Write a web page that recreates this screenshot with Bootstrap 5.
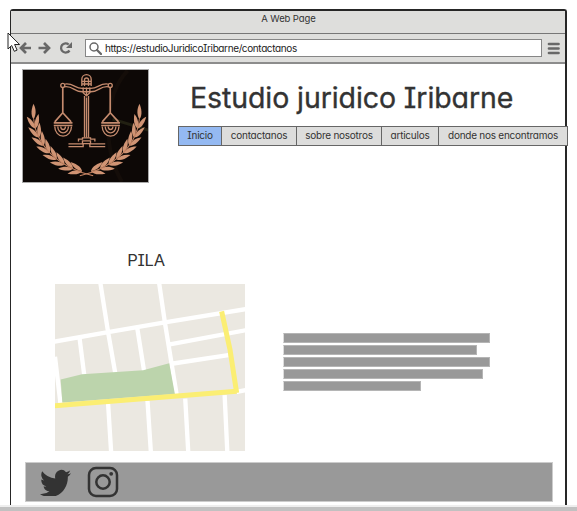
<!DOCTYPE html>
<html lang="es">
<head>
<meta charset="utf-8">
<title>Estudio juridico Iribarne</title>
<meta name="viewport" content="width=device-width, initial-scale=1">
<link href="https://cdn.jsdelivr.net/npm/bootstrap@5.3.0/dist/css/bootstrap.min.css" rel="stylesheet">
<style>
body{width:577px;height:511px;overflow:hidden;background:#fff;color:#333;font-family:Inter,"Noto Sans",sans-serif;font-feature-settings:"cv11","cv08"}
.screen{height:511px;padding:9px 0 0 10px}
.window{width:557px;height:496px;border:solid #262626;border-width:2px 2px 0 2px;border-left-width:1.5px;border-radius:3px 3px 0 0}
.titlebar{height:22px;background:#dededc;font-size:9.5px;line-height:15px;letter-spacing:-.1px;padding-left:1px}
.toolbar{height:31px;background:#dededc;border-top:1px solid #777;border-bottom:2px solid #8c8c8c;padding-left:7px}
.address{width:457px;height:18px;border:1px solid #868686;margin-left:11px;font-size:10px;line-height:16px;color:#222;padding-left:3px}
.address span{letter-spacing:-.38px;margin-left:3px}
.hero{height:119px;padding:5px 0 0 11px}
.brand{width:127px;height:114px;border:1px solid #aaa;flex:none}
.heading{font-size:28.5px;line-height:40px;margin:9px 0 8px 41px;white-space:nowrap;font-weight:400;letter-spacing:-.09px;-webkit-text-stroke:.35px #333}
.menu{width:390px;height:20px;border:1px solid #666;background:#dddddc;font-size:10px;line-height:17px;margin-left:29px}
.menu .nav-link{padding:0;color:#333;text-align:center;white-space:nowrap;border-right:1px solid #666;letter-spacing:-.25px}
.menu .nav-link:last-child{border:0}
.menu .nav-link.active{background:#94b9f2}
.w1{width:43px}.w2{width:75px}.w3{width:85px}.w4{width:57px}.w5{width:128px}
.content{height:279px;padding:66px 0 0 44px}
.place{width:190px}
.place h2{font-size:16.5px;line-height:22px;margin:0 8px 13px 0;text-align:center;font-weight:400;letter-spacing:-.2px}
.paragraph{padding:84px 0 0 38px}
.textbar{height:10px;margin-bottom:2px;background:#999;border:1px solid #b5b5b5;border-left-color:#ddd}
.l1{width:207px}.l2{width:194px}.l4{width:200px}.l5{width:138px}
.social{width:528px;height:40px;margin-left:14px;background:#999;border:1px solid #ccc;padding-left:14px}
.edge{height:6px;background:#c1c1c1;border-top:2px solid #eee;margin-left:-10px}
.pointer{position:absolute;left:7px;top:32px}
svg{display:block;flex:none}
</style>
<script src="https://cdn.jsdelivr.net/npm/bootstrap@5.3.0/dist/js/bootstrap.bundle.min.js"></script>
</head>
<body>
<div class="screen">
<div class="window">
  <div class="titlebar text-center">A Web Page</div>
  <div class="toolbar d-flex align-items-center">
    <svg width="56" height="14" viewBox="0 0 56 14" fill="none" stroke="#686868" stroke-width="2.7"><path d="M13 7H3M8 2L3 7l5 5M20.500 7H31M26 2l5 5-5 5"/><path d="M51.500 9.500a4.600 4.600 0 1 1-.8-6" stroke-width="2.300"/><path d="M54 1v6h-6z" fill="#686868" stroke="none"/></svg>
    <div class="address d-flex align-items-center bg-white">
      <svg width="13" height="13" viewBox="0 0 13 13" fill="none" stroke="#686868"><circle cx="5" cy="5" r="4" stroke-width="1.500"/><path d="M8 8l4 4" stroke-width="2.300" stroke-linecap="round"/></svg>
      <span>https://estudioJuridicoIribarne/contactanos</span>
    </div>
    <svg class="ms-1" width="15" height="13" viewBox="0 0 15 13" stroke="#686868" stroke-width="2.700" stroke-linecap="round"><path d="M3 2h9.500M3 6.500h9.500M3 11h9.500"/></svg>
  </div>
  <header class="hero d-flex">
    <div class="brand">
      <svg width="125" height="112" viewBox="22 18 374 335" preserveAspectRatio="none" aria-label="Balanza">
        <defs>
          <g id="pan" fill="none" stroke="#c58b6e" stroke-width="4"><path d="M141 70v76M141 146l-24 27M141 146l25 27" stroke-width="5"/><path d="M114 176h56M114 184h56" stroke-width="5"/><path d="M117 187a25 29 0 0 0 50 0M126 187a16 19 0 0 0 32 0M135 187a7 9 0 0 0 14 0"/></g>
          <g id="half"></g>
        </defs>
        <path fill="#0d0806" d="M20 16h380v340H20z"/>
        <path d="M335 20q-52 55-57 155t40 178" fill="none" stroke="#140d09" stroke-width="12"/>
        <path d="M290 165l106 33" stroke="#222012" stroke-width="9"/>
        <use href="#pan"/><use href="#pan" x="142"/>
        <g fill="none" stroke="#c58b6e" stroke-width="4">
          <circle cx="141" cy="64" r="6"/><circle cx="283" cy="64" r="6"/>
          <path d="M148 60c25-3 28 12 51 13h26c23-1 26-16 51-13M148 68c25-2 26 15 51 15h26c25 0 26-17 51-15"/>
          <path d="M198 66V46a14 14 0 0 1 28 0v20M206 66V48a6 6 0 0 1 12 0v18M198 52h28M198 60h28M202 70v16l10 9 10-9V70M212 70v24"/>
          <path d="M206 96v124M212 100v120M218 96v124"/><path d="M158 239h42v-9h24v9h44M158 247h44v-9h20v9h46M188 232v-7h12v-4h24v4h13v7"/>
        </g>
        <use href="#half"/><use href="#half" transform="matrix(-1 0 0 1 424 0)"/>
      </svg>
    </div>
    <div>
      <h1 class="heading">Estudio juridico Iribarne</h1>
      <nav class="menu nav flex-nowrap position-relative">
        <a class="nav-link active w1" href="#">Inicio</a><a class="nav-link w2" href="#">contactanos</a><a class="nav-link w3" href="#">sobre nosotros</a><a class="nav-link w4" href="#">articulos</a><a class="nav-link w5" href="#">donde nos encontramos</a>
      </nav>
    </div>
  </header>
  <main class="content d-flex">
    <section class="place">
      <h2>PILA</h2>
      <svg width="190" height="167" viewBox="16 132 569 500" preserveAspectRatio="none" fill="none" stroke="#fff" stroke-width="13">
        <path fill="#ebe8e1" stroke="none" d="M16 132h569v500H16z"/>
        <path d="M10 305L175 276 345 247 590 207M152 130l23 146 22 126M328 130l17 117 35 215M89 290l15 118M262 262l21 132M360 313l230-43M370 370l165-25M16 350l17 145M560 455l30-6M175 490l9 144M293 482l10 152M406 475l9 159M524 465l8 169"/>
        <path fill="#bcd4ac" stroke="none" d="M33 418l64-16 183-12 78-21 17 92-337 26z"/>
        <path stroke="#fbee73" stroke-width="15" d="M14 497l546-44M515 214l25 114 20 130"/>
      </svg>
    </section>
    <section class="paragraph">
      <div class="textbar l1"></div><div class="textbar l2"></div><div class="textbar l1"></div><div class="textbar l4"></div><div class="textbar l5"></div>
    </section>
  </main>
  <footer class="social d-flex align-items-center">
    <svg width="31" height="27" viewBox="0 1.500 16 13" preserveAspectRatio="none" fill="#333"><path d="M5.026 15c6.038 0 9.341-5.003 9.341-9.334 0-.14 0-.282-.006-.422A6.685 6.685 0 0 0 16 3.542a6.658 6.658 0 0 1-1.889.518 3.301 3.301 0 0 0 1.447-1.817 6.533 6.533 0 0 1-2.087.793A3.286 3.286 0 0 0 7.875 6.030a9.325 9.325 0 0 1-6.767-3.429 3.289 3.289 0 0 0 1.018 4.382A3.323 3.323 0 0 1 .640 6.575v.045a3.288 3.288 0 0 0 2.632 3.218 3.203 3.203 0 0 1-.865.115 3.230 3.230 0 0 1-.614-.057 3.283 3.283 0 0 0 3.067 2.277A6.588 6.588 0 0 1 .780 13.580a6.320 6.320 0 0 1-.780-.045A9.344 9.344 0 0 0 5.026 15z"/></svg>
    <svg class="ms-3" width="32" height="32" viewBox="0 0 32 32" fill="none" stroke="#333" stroke-width="2.500"><rect x="2" y="2" width="28" height="28" rx="7"/><circle cx="16" cy="16" r="6.700"/><circle cx="24.200" cy="7.800" r="1.900" fill="#333" stroke="none"/></svg>
  </footer>
</div>
<div class="edge"></div>
</div>
<svg class="pointer" width="14" height="21" viewBox="0 0 14 21"><path d="M1 1v16l3.700-3.500 2.600 5.800 2.800-1.200-2.500-5.600h5z" fill="#fff" stroke="#222"/></svg>
<script>
// Laurel leaves follow a cubic curve from the upper tip to the foot of the wreath.
const half = document.getElementById('half');
const P = [[54,165],[62,245],[130,312],[208,322]];
const at = t => [0,1].map(k => (1-t)**3*P[0][k]+3*(1-t)**2*t*P[1][k]+3*(1-t)*t*t*P[2][k]+t**3*P[3][k]);
const leaf = (x,y,a,s,f) => {
  const p = document.createElementNS('http://www.w3.org/2000/svg','path');
  p.setAttribute('d','M0 0C7-7 20-11 44-4C29 6 13 6 0 0Z');
  p.setAttribute('fill','#d09474');
  p.setAttribute('transform',`translate(${x} ${y}) rotate(${a}) scale(${s} ${f*s})`);
  half.appendChild(p);
};
leaf(54,165,-86,1.05,1);
for (let i=0;i<8;i++){
  const t=.12+i*.12,[x,y]=at(t),[u,v]=at(t-.02);
  const a=Math.atan2(v-y,u-x)*180/Math.PI;
  leaf(x,y,a-16,1,1);
  leaf(x,y,a+22,1,-1);
}
const stem=document.createElementNS('http://www.w3.org/2000/svg','path');
stem.setAttribute('d','M54 165C62 245 130 312 232 334');
stem.setAttribute('fill','none');stem.setAttribute('stroke','#c58362');stem.setAttribute('stroke-width','3');
half.appendChild(stem);
</script>
</body>
</html>
